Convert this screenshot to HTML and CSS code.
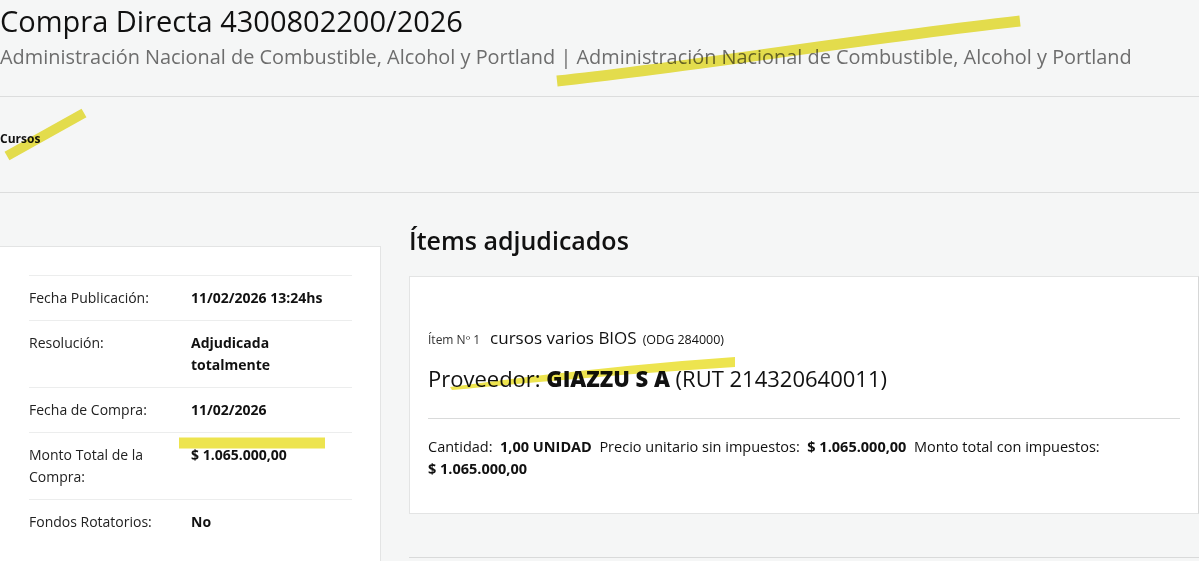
FILE: index.html
```html
<!DOCTYPE html>
<html lang="es">
<head>
    <meta charset="UTF-8">
    <meta name="viewport" content="width=device-width, initial-scale=1.0">
    <title>Compra Directa 4300802200/2026</title>
    <link rel="stylesheet" href="styles.css">
</head>
<body>
    <div class="page">
        <!-- Encabezado de la compra -->
        <header class="header">
            <h1 class="title">Compra Directa 4300802200/2026</h1>
            <p class="subtitle">Administración Nacional de Combustible, Alcohol y Portland | Administración Nacional de Combustible, Alcohol y Portland</p>
        </header>

        <section class="category">
            <strong>Cursos</strong>
        </section>

        <div class="main">
            <!-- Datos generales -->
            <aside class="summary">
                <div class="summary-row">
                    <span class="summary-label">Fecha Publicación:</span>
                    <span class="summary-value">11/02/2026 13:24hs</span>
                </div>
                <div class="summary-row">
                    <span class="summary-label">Resolución:</span>
                    <span class="summary-value">Adjudicada totalmente</span>
                </div>
                <div class="summary-row">
                    <span class="summary-label">Fecha de Compra:</span>
                    <span class="summary-value">11/02/2026</span>
                </div>
                <div class="summary-row">
                    <span class="summary-label">Monto Total de la Compra:</span>
                    <span class="summary-value">$ 1.065.000,00</span>
                </div>
                <div class="summary-row">
                    <span class="summary-label">Fondos Rotatorios:</span>
                    <span class="summary-value">No</span>
                </div>
            </aside>

            <!-- Items adjudicados -->
            <section class="items">
                <h2 class="items-title">Ítems adjudicados</h2>
                <div class="item-card">
                    <div class="item-head">
                        <span class="item-number">Ítem Nº 1</span>
                        <span class="item-name">cursos varios BIOS</span>
                        <span class="item-code">(ODG 284000)</span>
                    </div>
                    <div class="item-provider">
                        Proveedor: <b>GIAZZU S A</b> (RUT 214320640011)
                    </div>
                    <div class="item-detail">
                        Cantidad:&nbsp; <b>1,00 UNIDAD</b>&nbsp; Precio unitario sin impuestos:&nbsp; <b>$ 1.065.000,00</b>&nbsp; Monto total con impuestos:&nbsp; <b>$ 1.065.000,00</b>
                    </div>
                </div>
                <div class="items-next"></div>
            </section>
        </div>

        <!-- Trazos de resaltador sobre la captura -->
        <svg class="marker" width="1199" height="561" viewBox="0 0 1199 561">
            <path d="M557 81 C 700 66, 850 40, 1020 21" stroke="#ede44f" stroke-width="11" fill="none"/>
            <path d="M7 156 L 84 113" stroke="#ede44f" stroke-width="10" fill="none"/>
            <path d="M179 443 L 325 443" stroke="#ede44f" stroke-width="11" fill="none"/>
            <path d="M450 387 C 560 372, 650 363, 735 357 L 735 367 C 650 372, 560 380, 452 390 Z" fill="#ede44f"/>
        </svg>
    </div>
</body>
</html>
```

FILE: styles.css
```css
body {
    margin: 0;
    background: #f5f6f6;
    font-family: "Open Sans", "Noto Sans", sans-serif;
    color: #111;
    overflow: hidden;
}
.page {
    position: relative;
    width: 1199px;
}
.header {
    padding-bottom: 24px;
    border-bottom: 1px solid #dcdddd;
}
.title {
    margin: 0;
    font-size: 29px;
    font-weight: 400;
    line-height: 42px;
    color: #111;
}
.subtitle {
    margin: 0;
    font-size: 19.9px;
    line-height: 30px;
    color: #6d6d6d;
}
.category {
    padding: 34px 0 45px;
    font-size: 12px;
    line-height: 16px;
    border-bottom: 1px solid #dcdddd;
}
.main {
    display: grid;
    grid-template-columns: 381px 1fr;
    column-gap: 28px;
}
.summary {
    margin-top: 53px;
    background: #fff;
    border: 1px solid #e3e4e4;
    border-left: none;
    padding: 28px 28px 20px 29px;
    height: 300px;
}
.summary-row {
    display: grid;
    grid-template-columns: 162px 1fr;
    padding: 11px 0;
    border-top: 1px solid #eceded;
    font-size: 14px;
    line-height: 22px;
}
.summary-label {
    color: #222;
    padding-right: 20px;
}
.summary-value {
    font-weight: 700;
    padding-right: 12px;
}
.items-title {
    margin: 32px 0 0;
    font-size: 25px;
    font-weight: 600;
    line-height: 30px;
}
.item-card {
    margin-top: 21px;
    background: #fff;
    border: 1px solid #e3e4e4;
    border-right-color: #d6d7d7;
    padding: 50px 18px 33px;
}
.item-head {
    display: flex;
    align-items: baseline;
    gap: 8px;
    line-height: 22px;
}
.item-number {
    font-size: 12px;
    color: #333;
    margin-right: 2px;
}
.item-name {
    font-size: 17px;
    font-weight: 500;
}
.item-code {
    font-size: 12.5px;
    margin-left: -2px;
}
.item-provider {
    margin-top: 11px;
    padding-bottom: 24px;
    font-size: 22px;
    line-height: 32px;
    border-bottom: 1px solid #d9dada;
}
.item-provider b {
    font-weight: 800;
}
.item-detail {
    padding-top: 17px;
    font-size: 14.5px;
    line-height: 22px;
    color: #111;
}
.item-detail b {
    white-space: nowrap;
}
.items-next {
    margin-top: 43px;
    border-top: 1px solid #d9dada;
}
.marker {
    position: absolute;
    left: 0;
    top: 0;
    pointer-events: none;
    mix-blend-mode: multiply;
}
```
